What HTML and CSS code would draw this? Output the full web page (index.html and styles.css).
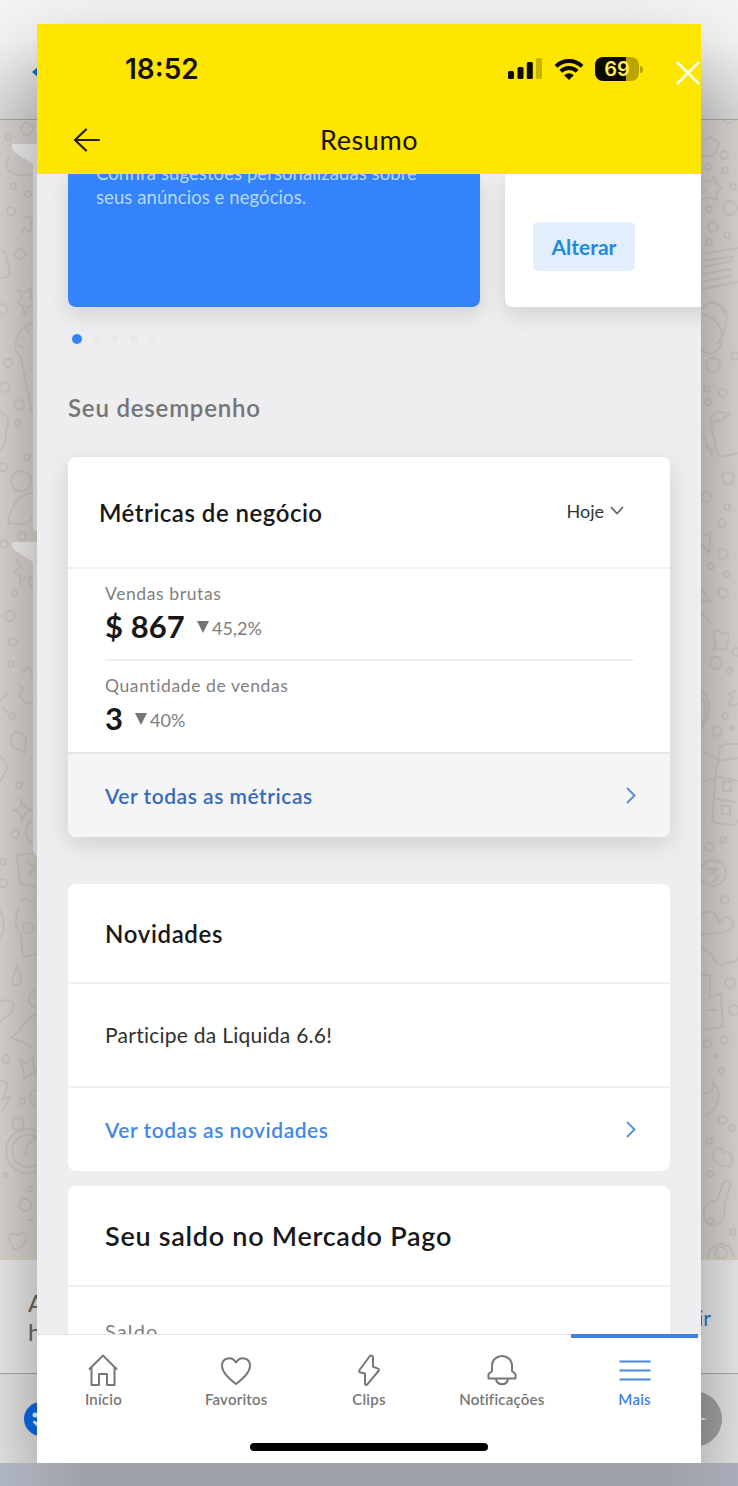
FILE: index.html
```html
<!DOCTYPE html>
<html lang="pt-BR">
<head>
  <meta charset="UTF-8">
  <title>Resumo</title>
  <link rel="stylesheet" href="styles.css">
</head>
<body>

  <div class="pagina">

    <!-- Conversa ao fundo -->
    <div class="fundo">
      <div class="fundo-topo">
        <svg width="14" height="16" viewBox="0 0 14 16"><path d="M10 0L1 8l9 8z" fill="#0a6fe0"/></svg>
      </div>
      <div class="fundo-chat">
        <svg class="desenhos" width="38" height="1139" viewBox="0 0 38 1139" fill="none">
          <circle cx="27" cy="9" r="6"/><circle cx="8" cy="17" r="3"/>
          <path d="M9 36C2 48 10 56 24 55l13-1"/>
          <circle cx="13" cy="66" r="3"/><circle cx="28" cy="74" r="3"/><circle cx="11" cy="91" r="4"/>
          <path d="M23 96l9 2-2 14-6-4-2 6"/><circle cx="20" cy="134" r="5"/>
          <path d="M0 130c8 0 8 18 10 24-5 6-8 3-10 4"/>
          <path d="M18 170l7 3 6-5 0 9 5 8-9 2-3 8-1-9-7-4 6-3z"/>
          <path d="M33 203c-12 2-19 16-17 28l5 7 11 55M20 216l6 3M18 226l6 1M26 208l3 6"/>
          <circle cx="2" cy="189" r="5"/><circle cx="8" cy="243" r="4"/><circle cx="5" cy="267" r="5"/><circle cx="19" cy="285" r="5"/>
          <circle cx="18" cy="303" r="3"/><circle cx="27" cy="337" r="3"/><circle cx="3" cy="347" r="4"/>
          <circle cx="21" cy="361" r="10"/><path d="M0 292c8 2 10 9 6 17 1 13-2 15-6 22"/>
          <path d="M37 373c-18-1-25 10-29 30 8 1 20 4 24-5"/>
          <circle cx="22" cy="416" r="4"/><circle cx="4" cy="424" r="4"/>
          <path d="M15 438l6 8-8 6 7 3v10l5-8 9 2M37 455c-10-1-11 13-2 13"/>
          <circle cx="14" cy="473" r="3"/><circle cx="10" cy="496" r="5"/><circle cx="13" cy="522" r="4"/><circle cx="11" cy="544" r="3"/>
          <path d="M22 551l7-4 4 9M18 565l6 3-5 7 7 8 11 1M0 580l8-7M3 588l6 6"/>
          <circle cx="12" cy="596" r="3"/><path d="M11 617c4-8 11-4 15 1l-1 15-5-4c-8 1-10-6-9-12z"/>
          <path d="M0 635l8 12-8 15"/><circle cx="19" cy="665" r="3"/>
          <path d="M12 690c7 1 10-3 9-12 1 9 6 12 14 12-8 1-12 4-13 13-1-9-3-12-10-13z"/>
          <circle cx="15" cy="714" r="4"/><path d="M31 701c-9 8-5 22 6 24M17 735l20-2M17 735l3 29 17 3M27 740l8 9-8 6"/>
          <circle cx="3" cy="742" r="3"/><circle cx="3" cy="763" r="4"/>
          <path d="M20 782c4-6 10-3 13 3M19 787c-6 14-3 22 2 28l2 22 14-3M0 790c5 10 5 20 0 28"/>
          <circle cx="28" cy="808" r="5"/><path d="M17 847c-2 7-8 15-3 18 8 1 9-6 3-18z"/>
          <path d="M36 870c-10 3-9 14-1 17M0 882c10-5 16 0 13 8-3 6-7 5-13 12"/>
          <path d="M37 895c-11 0-15 17-26 22 4 5 14 2 20 11"/>
          <circle cx="6" cy="939" r="4"/><path d="M20 940l7 4 6-6 1 10 3 5-6 1-7 5-1-9z"/>
          <path d="M0 960l8 4-5 15 8-3-9 15"/><circle cx="22" cy="981" r="3"/><path d="M37 970c-10-1-9 14-2 16"/>
          <circle cx="28" cy="1031" r="22"/><circle cx="28" cy="1031" r="16"/><path d="M26 1037c-2-12 7-20 11-18"/>
          <circle cx="18" cy="1004" r="6"/><circle cx="5" cy="1055" r="2"/><path d="M27 1067h6M27 1071h6"/><circle cx="25" cy="1085" r="6"/>
          <path d="M27 1100h6M10 1122c-3-12 8-8 8-6 2-6 10-2 8 4-1 7-6 8-12 9z"/>
        </svg>
        <svg class="baloes" width="25" height="740" viewBox="0 0 25 740">
          <path d="M0 24h25v387q-4-1-4-4V44L4 33q-6-5-4-9z"/>
          <path d="M0 422h25v314q-4-2-4-7V442L4 431q-6-5-4-9z"/>
        </svg>
        <svg class="desenhos direita" width="37" height="1139" viewBox="0 0 37 1139" fill="none">
          <path d="M22 0c4 5 10 3 12-1M1 22c8-8 12-3 13-2 8 4 0 10 0 13-3 5-8 3-14 2"/>
          <circle cx="23" cy="35" r="4"/><circle cx="7" cy="47" r="3"/><circle cx="24" cy="50" r="3"/>
          <path d="M2 60l7 2 4-5 3 8 5 2-6 6 1 7-8-3-7 2M1 74l4-6"/>
          <circle cx="32" cy="67" r="3"/><circle cx="8" cy="89" r="3"/><circle cx="29" cy="88" r="7"/>
          <circle cx="12" cy="107" r="5"/><circle cx="26" cy="115" r="3"/><circle cx="8" cy="122" r="3"/>
          <path d="M1 134l36-6M1 141l30-4v4L1 147M1 154l30-5M1 162l28-6v-3M1 169l36-7"/>
          <path d="M2 189c5-10 18-7 23 3 3 10-1 20-9 32M2 195c13 2 22 14 18 30-5 10-14 12-20 3M8 182c10 0 15 6 14 14"/>
          <circle cx="12" cy="245" r="7"/><circle cx="34" cy="236" r="4"/><circle cx="22" cy="273" r="4"/>
          <circle cx="6" cy="269" r="3"/><circle cx="7" cy="282" r="3"/>
          <g transform="translate(0 28)">
            <path d="M9 273c4-12 10-10 19-7l-7 6-12 2 8 33 3 2 17-4M0 283l12 26M4 299l9 3"/>
          </g>
          <circle cx="27" cy="358" r="6"/><circle cx="5" cy="377" r="5"/><circle cx="26" cy="387" r="3"/><circle cx="21" cy="403" r="4"/>
          <path d="M1 416l9-3-2 20-7-9"/><circle cx="22" cy="434" r="5"/><circle cx="10" cy="446" r="3"/><circle cx="26" cy="454" r="3"/><circle cx="22" cy="473" r="5"/>
          <g transform="translate(0 60)">
            <path d="M0 408l9 14-9-2M0 432l10 12M12 455c3-10 7-1 11-2 9-1 3 9 2 16-6 2-9-4-14 2l4-8z"/>
            <circle cx="15" cy="483" r="6"/><circle cx="29" cy="491" r="3"/><circle cx="35" cy="472" r="4"/>
            <path d="M0 510c11 7 10 26 0 39M0 517c7 7 6 20 0 27M36 510l-9 4 5 3-5 9 10-2"/>
            <circle cx="24" cy="536" r="3"/><circle cx="16" cy="551" r="5"/><circle cx="31" cy="548" r="2"/>
          </g>
          <g transform="translate(0 57)">
            <path d="M1 574l17 9 1-13 5-3h13M15 597l2-13 20-3M15 597l-4 45q0 3 4 4l16 2q4 0 6-5M17 600l20 4M14 622l21 3M1 605l14-4"/>
            <path d="M22 605h8v9h-8zM21 629h8v8h-8z"/>
            <circle cx="8" cy="670" r="4"/><circle cx="22" cy="663" r="3"/><circle cx="12" cy="696" r="13"/>
            <path d="M6 692h12l-8 4 8 3-8 7"/><circle cx="24" cy="723" r="4"/>
          </g>
          <path d="M0 796c10-9 17-3 18 7 7-10 13-5 15 3-9 10-21 5-33 9M0 828c15 4 11 17 21 17 8-6 14 1 17-9"/>
          <circle cx="29" cy="863" r="5"/><path d="M1 855h8v22l11-3 2 33-21 3M6 890h9"/>
          <circle cx="23" cy="920" r="4"/><circle cx="6" cy="924" r="4"/><circle cx="15" cy="936" r="2"/><circle cx="33" cy="890" r="5"/>
          <path d="M1 974c10 0 14-7 9-13 8 5 10 17 5 22M4 995c10-3 14-14 14-23"/>
          <circle cx="21" cy="951" r="3"/><circle cx="8" cy="1021" r="3"/><circle cx="22" cy="1000" r="4"/><circle cx="31" cy="1008" r="3"/>
          <path d="M13 1040c-3-14 9-15 10-7 8-5 11 7 5 13-6 1-11-1-15-6z"/>
          <path d="M4 1100c-5-14 7-21 12-19l5-16c5-7 10-3 8 2l-6 18c4 18-13 28-19 15z"/>
          <circle cx="10" cy="1101" r="3"/><circle cx="9" cy="1054" r="3"/><circle cx="32" cy="1112" r="3"/>
          <path d="M7 1138c0-10 7-13 12-14 8 0 14 6 14 14"/><circle cx="20" cy="1133" r="6"/>
        </svg>
      </div>
      <div class="fundo-aviso">
        <p>A<br>h</p>
        <a>ir</a>
      </div>
      <div class="fundo-player">
        <svg width="34" height="34" viewBox="0 0 34 34"><circle cx="17" cy="17" r="17" fill="#0a6ef5"/><circle cx="11" cy="13" r="2.5" fill="#fff"/><path d="M10.500 20l4 4" stroke="#fff" stroke-width="3" stroke-linecap="round"/></svg>
        <svg width="56" height="56" viewBox="0 0 56 56"><circle cx="28" cy="28" r="28" fill="#a4a4a4"/><path d="M24 24.500l18 3.500-18 3z" fill="#f2f2f2"/></svg>
      </div>
    </div>

    <div class="celular">
      <header class="cabecalho">
        <div class="status">
          <span class="hora">18:52</span>
          <svg class="sinal" width="34" height="22" viewBox="0 0 34 22">
            <rect x="0" y="13" width="6" height="8" rx="1.5"/><rect x="9.5" y="9" width="6" height="12" rx="1.5"/>
            <rect x="18.8" y="4" width="6" height="17" rx="1.5"/><rect x="28" y="0" width="6" height="21" rx="1.5" fill-opacity=".22"/>
          </svg>
          <svg class="wifi" width="30" height="22" viewBox="0 0 30 22" fill="none" stroke="#0b0900" stroke-width="4">
            <path d="M2 8.3a18.5 18.5 0 0 1 26 0"/><path d="M6.8 13.2a11.8 11.8 0 0 1 16.4 0"/>
            <path d="M15 22l-4.8-4.8a7 7 0 0 1 9.6 0z" fill="#0b0900" stroke="none"/>
          </svg>
          <div class="bateria"><span>69</span></div>
          <i class="bateria-ponta"></i>
          <svg class="fechar" width="24" height="24" viewBox="0 0 24 24" fill="none" stroke="#fffde8" stroke-width="2.8"><path d="M1 1l22 22M23 1L1 23"/></svg>
        </div>
        <div class="titulo-barra">
          <svg width="28" height="24" viewBox="0 0 28 24" fill="none" stroke="#251d08" stroke-width="2.2" stroke-linecap="round" stroke-linejoin="round"><path d="M26 12H2M13 1.5L2 12l11 10.500"/></svg>
          <h1>Resumo</h1>
        </div>
      </header>

      <main class="conteudo">
        <div class="carrossel">
          <div class="card-azul">
            <p>Confira sugestões personalizadas sobre<br>seus anúncios e negócios.</p>
          </div>
          <div class="card-alterar">
            <button class="alterar">Alterar</button>
          </div>
        </div>
        <div class="pontos"><i class="ativo"></i><i></i><i></i><i></i><i class="menor"></i></div>

        <h2 class="secao">Seu desempenho</h2>

        <section class="card metricas">
          <div class="card-topo">
            <h3>Métricas de negócio</h3>
            <span class="periodo">Hoje
              <svg width="14" height="9" viewBox="0 0 14 9" fill="none" stroke="#666" stroke-width="1.7"><path d="M1 1l6 6.500L13 1"/></svg>
            </span>
          </div>
          <div class="metrica">
            <p>Vendas brutas</p>
            <div class="valor"><strong>$ 867</strong><i class="seta"></i><span>45,2%</span></div>
          </div>
          <div class="metrica">
            <p>Quantidade de vendas</p>
            <div class="valor"><strong>3</strong><i class="seta"></i><span>40%</span></div>
          </div>
          <a class="ver-mais">Ver todas as métricas
            <svg width="10" height="17" viewBox="0 0 10 17" fill="none" stroke="#5d8bd0" stroke-width="1.9"><path d="M1 1l7.500 7.500L1 16"/></svg>
          </a>
        </section>

        <section class="card novidades">
          <div class="card-topo"><h3>Novidades</h3></div>
          <p class="aviso">Participe da Liquida 6.6!</p>
          <a class="ver-mais">Ver todas as novidades
            <svg width="10" height="17" viewBox="0 0 10 17" fill="none" stroke="#5a90dd" stroke-width="1.9"><path d="M1 1l7.500 7.500L1 16"/></svg>
          </a>
        </section>

        <section class="card saldo">
          <div class="card-topo"><h3>Seu saldo no Mercado Pago</h3></div>
          <p>Saldo</p>
        </section>
      </main>

      <nav class="abas">
        <a>
          <svg width="32" height="34" viewBox="0 0 32 34"><path d="M2 16.500L16 2.500l14 14M4.500 14.500V32h7.500V21h8v11h7.500V14.500"/></svg>
          <span>Início</span>
        </a>
        <a>
          <svg width="32" height="34" viewBox="0 0 32 34"><path d="M16 31C10 26.500 2 20 2 13c0-8.500 10-10.500 14-3.500C20 2.500 30 4.500 30 13c0 7-8 13.500-14 18z"/></svg>
          <span>Favoritos</span>
        </a>
        <a>
          <svg width="32" height="34" viewBox="0 0 32 34"><path d="M16.500 3.500L6.500 17c-.7 1.200-.4 2 1 2.400l4.500 1v10c0 1.800 1.500 2 2.500.7L25.500 18c.8-1.200.6-2.200-.8-2.600l-4.700-1.600V4.500c0-2-2-2.700-3.500-1z"/></svg>
          <span>Clips</span>
        </a>
        <a>
          <svg width="32" height="34" viewBox="0 0 32 34"><path d="M2.500 25.500v-4.500l3.500-3v-5.500a10 9.500 0 0 1 20 0V18l3.500 3v4.500zM10 26c1 7 11 7 12 0"/></svg>
          <span>Notificações</span>
        </a>
        <a class="ativa">
          <svg width="32" height="34" viewBox="0 0 32 34"><path d="M.5 8.500h31M.5 17.500h31M.5 26.500h31"/></svg>
          <span>Mais</span>
        </a>
        <div class="indicador"></div>
      </nav>
    </div>

    <div class="rodape"></div>
  </div>

</body>
</html>
```
FILE: styles.css
```css
* {
  box-sizing: border-box;
}

body, h1, h2, h3, p {
  margin: 0;
}

body {
  font-family: Lato, "Open Sans", sans-serif;
  background: #f4f4f4;
}

svg {
  display: block;
  flex: none;
}

.pagina {
  display: grid;
  grid-template: 1463px 23px / 738px;
  width: 738px;
  height: 1486px;
  overflow: hidden;
}

/* Conversa ao fundo */
.fundo {
  grid-area: 1 / 1;
  display: grid;
  grid-template-rows: 120px 1140px 114px 89px;
}

.fundo-topo {
  padding: 64px 0 0 31px;
  background: linear-gradient(#f4f4f4 40px, #dcdcdc);
  border-bottom: 1px solid #aaa;
}

.fundo-chat {
  display: flex;
  background: #dcd7d1;
}

.desenhos {
  stroke: #cfcac4;
  stroke-width: 1.8;
}

.baloes {
  margin-left: -26px;
  fill: #f4f4f4;
}

.direita {
  margin-left: auto;
}

.fundo-aviso {
  display: flex;
  justify-content: space-between;
  align-items: center;
  padding: 1px 27px 0 28px;
  background: #ededed;
  border-bottom: 1px solid #aaa;
  font-size: 24px;
  line-height: 29px;
  color: #666;
}

.fundo-aviso a {
  font-size: 21px;
  color: #0d7cd6;
}

.fundo-player {
  display: flex;
  justify-content: space-between;
  align-items: center;
  padding: 0 16px 0 24px;
  background: #e7e7e7;
}

.rodape {
  grid-area: 2 / 1;
  background: linear-gradient(90deg, #afb5c2, #9fa1a9 12%, #9fa1a9 90%, #a7acb8);
}

/* Tela do app */
.celular {
  grid-area: 1 / 1;
  display: grid;
  grid-template-rows: 150px 1160px 129px;
  margin: 24px 37px 0;
  width: 664px;
  background: #eeedef;
  box-shadow: 0 38px 75px rgba(0,0,0,0.38);
}

.cabecalho {
  background: #ffe600;
  color: #171200;
}

.status {
  display: flex;
  align-items: center;
  height: 90px;
  padding-left: 88px;
}

.hora {
  flex: 1;
  font: 600 28px Inter, sans-serif;
}

.wifi {
  margin: 0 11px 0 12px;
}

.sinal {
  fill: #0b0900;
}

.bateria {
  width: 44px;
  height: 24px;
  border-radius: 8px;
  background: linear-gradient(90deg, #0b0900 70%, #b9a400 70%);
  font: 600 20px/24px Inter, sans-serif;
  text-align: center;
  color: #ffee55;
}

.bateria-ponta {
  width: 3px;
  height: 7px;
  margin-left: 1px;
  border-radius: 0 3px 3px 0;
  background: #b9a400;
}

.fechar {
  margin: 8px 1px 0 33px;
}

.titulo-barra {
  display: flex;
  align-items: center;
  height: 52px;
  padding-left: 36px;
}

h1 {
  margin-left: 219px;
  font-size: 27px;
  font-weight: 400;
  line-height: 30px;
  letter-spacing: 0.6px;
}

.conteudo {
  overflow: hidden;
}

.carrossel {
  display: flex;
  gap: 25px;
  height: 133px;
  margin-left: 31px;
}

.card-azul {
  flex: none;
  width: 412px;
  padding-left: 28px;
  border-radius: 0 0 8px 8px;
  background: #3483fa;
  color: #b6d9ff;
  font-size: 18.5px;
  line-height: 24px;
  letter-spacing: 0.08px;
  box-shadow: 0 8px 22px rgba(0,0,0,0.12);
}

.card-azul p {
  margin-top: -13px;
}

.card-alterar {
  flex: none;
  width: 412px;
  padding: 48px 28px;
  border-radius: 0 0 8px 8px;
  background: #fff;
  box-shadow: 0 8px 22px rgba(0,0,0,0.12);
}

.alterar {
  width: 102px;
  height: 49px;
  padding: 0;
  border: none;
  border-radius: 5px;
  background: #e2eefb;
  color: #2389dc;
  font: 700 21px Lato, sans-serif;
}

.pontos {
  display: flex;
  align-items: center;
  gap: 10px;
  height: 12px;
  margin: 26px 0 0 35px;
}

.pontos i {
  width: 8.5px;
  height: 8.5px;
  border-radius: 50%;
  background: #e9e9ea;
}

.pontos .ativo {
  width: 10px;
  height: 10px;
  background: #3483fa;
}

.pontos .menor {
  width: 6px;
  height: 6px;
}

.secao {
  margin: 48px 0 0 31px;
  font-size: 24px;
  font-weight: 600;
  line-height: 30px;
  letter-spacing: 0.8px;
  color: #757575;
}

.card {
  width: 602px;
  margin-left: 31px;
  border-radius: 8px;
  background: #fff;
}

.card-topo {
  display: flex;
  align-items: center;
  justify-content: space-between;
  padding: 0 46px 0 37px;
  border-bottom: 2px solid #f0eff1;
}

h3 {
  font-size: 24px;
  font-weight: 600;
  letter-spacing: 0.5px;
  color: #18181a;
}

.metricas {
  height: 380px;
  margin-top: 34px;
  box-shadow: 0 8px 24px rgba(0,0,0,0.13);
}

.metricas .card-topo {
  height: 112px;
  padding-left: 31px;
}

.periodo {
  display: flex;
  align-items: center;
  gap: 6px;
  margin-top: -3px;
  font-size: 18px;
  color: #333;
}

.metrica {
  height: 90px;
  margin: 0 37px;
  padding-top: 13px;
}

.metrica + .metrica {
  height: 93px;
  border-top: 2px solid #eeedef;
}

.metrica p {
  font-size: 17.5px;
  line-height: 24px;
  letter-spacing: 0.6px;
  color: #808080;
}

.valor {
  display: flex;
  align-items: center;
  height: 40px;
}

.valor strong {
  font-size: 31px;
  letter-spacing: 0.1px;
  color: #18181a;
}

.valor span {
  padding-top: 4px;
  font-size: 18px;
  color: #7c7c7c;
}

.seta {
  margin: 2px 3px 0 12px;
  border: 6px solid transparent;
  border-top: 12px solid #757575;
  border-bottom: 0;
}

.ver-mais {
  display: flex;
  align-items: center;
  justify-content: space-between;
  height: 82px;
  padding: 0 34px 0 37px;
  font-size: 21px;
  font-weight: 600;
  letter-spacing: 0.52px;
  color: #4488e4;
}

.metricas .ver-mais {
  height: 85px;
  border-top: 2px solid #e4e4e6;
  border-radius: 0 0 8px 8px;
  background: #f5f5f7;
  color: #356bbd;
}

.novidades {
  height: 287px;
  margin-top: 47px;
}

.novidades .card-topo {
  height: 100px;
}

.novidades h3 {
  letter-spacing: 0.65px;
}

.aviso {
  height: 104px;
  padding-left: 37px;
  border-bottom: 2px solid #f0eff1;
  font-size: 21px;
  line-height: 102px;
  letter-spacing: 0.26px;
  color: #303030;
}

.saldo {
  height: 200px;
  margin-top: 15px;
}

.saldo .card-topo {
  height: 101px;
}

.saldo h3 {
  font-size: 27px;
  letter-spacing: 0.72px;
}

.saldo p {
  padding: 32px 37px;
  font-size: 20px;
  line-height: 24px;
  letter-spacing: 1.1px;
  color: #808080;
}

/* Barra inferior */
.abas {
  position: relative;
  display: grid;
  grid-template-columns: repeat(5, 132.8px);
  background: #fff;
  border-top: 1px solid #e2e2e2;
}

.abas a {
  display: flex;
  flex-direction: column;
  align-items: center;
  padding-top: 18px;
  font-size: 15px;
  font-weight: 600;
  letter-spacing: 0.2px;
  color: #777;
}

.abas svg {
  margin-bottom: 3px;
  fill: none;
  stroke: #777;
  stroke-width: 2;
  stroke-linejoin: round;
}

.abas .ativa {
  border-top: 4px solid #3f81e4;
  margin: -1px 3px 0 3px;
  padding-top: 15px;
  color: #3f81e4;
}

.ativa svg {
  stroke: #4a86dc;
}

.indicador {
  position: absolute;
  left: 213px;
  bottom: 12px;
  width: 238px;
  height: 8px;
  border-radius: 4px;
  background: #000;
}
```
